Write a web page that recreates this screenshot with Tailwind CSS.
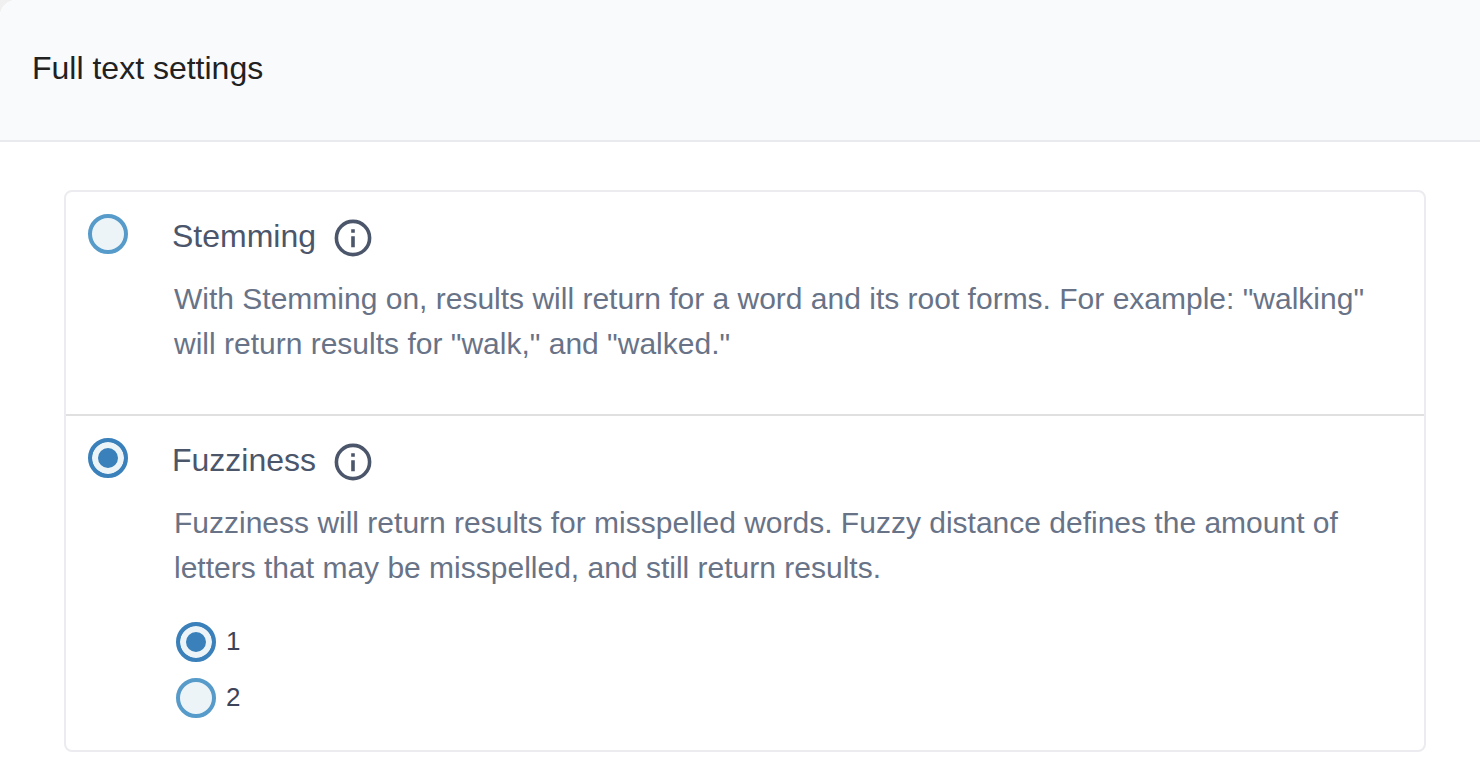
<!DOCTYPE html>
<html lang="en">

<head>
    <meta charset="UTF-8">
    <meta name="viewport" content="width=device-width, initial-scale=1.0">
    <title>Full text settings</title>
    <script src="https://cdn.jsdelivr.net/npm/@tailwindcss/browser@4"></script>
</head>

<body class="bg-[#f0f0f1] font-['Liberation_Sans',Arial,sans-serif]">
    <main class="min-h-screen bg-white rounded-tl-2xl overflow-hidden">
        <header class="bg-[#f9fafc] border-b-2 border-[#e9eaed] px-8 pt-11 pb-12">
            <h1 class="text-[32px] leading-[48px] text-[#212121]">Full text settings</h1>
        </header>

        <form class="pl-16 pr-[54px] pt-12 pb-4">
            <div class="border-2 border-[#ebebf0] rounded-lg">
                <!-- stemming -->
                <section class="flex items-start gap-11 px-[22px] pt-[22px] pb-12 border-b-2 border-[#e0e0e0]">
                    <input type="radio" name="mode" id="stemming" aria-describedby="stemming-text"
                        class="appearance-none shrink-0 size-10 rounded-full border-4 border-[#569bc9] bg-[#edf4f8] checked:border-[#3a80ba] checked:bg-[#3a80ba] checked:shadow-[inset_0_0_0_6px_#edf4f8]">
                    <div>
                        <div class="flex items-center gap-[18px] h-12 text-[#4b566b]">
                            <label for="stemming" class="pb-1 text-[32px] leading-[44px]">Stemming</label>
                            <svg xmlns="http://www.w3.org/2000/svg" viewBox="0 0 38 38" fill="none" class="size-[38px] shrink-0">
                                <circle cx="19" cy="19" r="16.6" stroke="currentColor" stroke-width="3.6" />
                                <path fill="currentColor" d="M17.2 10.2h3.6v3.6h-3.6zM17.2 17.2h3.6v11h-3.6z" />
                            </svg>
                        </div>
                        <p id="stemming-text" class="mt-[14px] pl-0.5 text-[30px] leading-[45px] text-[#687387]">With Stemming on, results will return for a word and its root forms. For example: "walking" will return results for "walk," and "walked."</p>
                    </div>
                </section>

                <!-- fuzziness -->
                <section class="flex items-start gap-11 px-[22px] pt-[22px] pb-8">
                    <input type="radio" name="mode" id="fuzziness" checked aria-describedby="fuzziness-text"
                        class="appearance-none shrink-0 size-10 rounded-full border-4 border-[#569bc9] bg-[#edf4f8] checked:border-[#3a80ba] checked:bg-[#3a80ba] checked:shadow-[inset_0_0_0_6px_#edf4f8]">
                    <div>
                        <div class="flex items-center gap-[18px] h-12 text-[#4b566b]">
                            <label for="fuzziness" class="pb-1 text-[32px] leading-[44px]">Fuzziness</label>
                            <svg xmlns="http://www.w3.org/2000/svg" viewBox="0 0 38 38" fill="none" class="size-[38px] shrink-0">
                                <circle cx="19" cy="19" r="16.6" stroke="currentColor" stroke-width="3.6" />
                                <path fill="currentColor" d="M17.2 10.2h3.6v3.6h-3.6zM17.2 17.2h3.6v11h-3.6z" />
                            </svg>
                        </div>
                        <p id="fuzziness-text" class="mt-[14px] pl-0.5 text-[30px] leading-[45px] text-[#687387]">Fuzziness will return results for misspelled words. Fuzzy distance defines the amount of letters that may be misspelled, and still return results.</p>

                        <div class="flex flex-col gap-4 mt-8 pl-1 text-[26px] leading-[38px] text-[#3d4459]">
                            <div class="flex items-center gap-[10px]">
                                <input type="radio" name="distance" id="distance-1" checked
                                    class="appearance-none shrink-0 size-10 rounded-full border-4 border-[#569bc9] bg-[#edf4f8] checked:border-[#3a80ba] checked:bg-[#3a80ba] checked:shadow-[inset_0_0_0_6px_#edf4f8]">
                                <label for="distance-1" class="pb-0.5">1</label>
                            </div>
                            <div class="flex items-center gap-[10px]">
                                <input type="radio" name="distance" id="distance-2"
                                    class="appearance-none shrink-0 size-10 rounded-full border-4 border-[#569bc9] bg-[#edf4f8] checked:border-[#3a80ba] checked:bg-[#3a80ba] checked:shadow-[inset_0_0_0_6px_#edf4f8]">
                                <label for="distance-2" class="pb-0.5">2</label>
                            </div>
                        </div>
                    </div>
                </section>
            </div>
        </form>
    </main>
</body>

</html>
